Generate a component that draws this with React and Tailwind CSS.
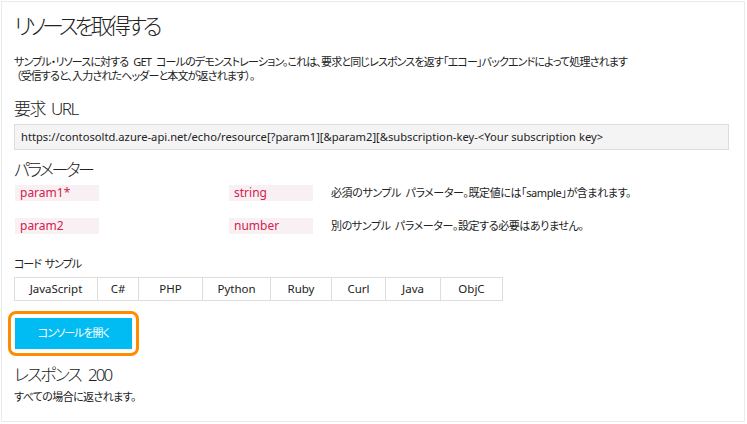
const FONT = "font-['Segoe_UI','Noto_Sans','Noto_Sans_CJK_JP',sans-serif] [font-feature-settings:'palt']"

const PARAMS = [
  { name: 'param1*', type: 'string', desc: '必須のサンプル パラメーター。既定値には「sample」が含まれます。' },
  { name: 'param2', type: 'number', desc: '別のサンプル パラメーター。設定する必要はありません。' },
]

const TABS = [
  ['JavaScript', 'w-[82px]'],
  ['C#', 'w-[41px]'],
  ['PHP', 'w-[64px]'],
  ['Python', 'w-[68px]'],
  ['Ruby', 'w-[61px]'],
  ['Curl', 'w-[54px]'],
  ['Java', 'w-[55px]'],
  ['ObjC', 'w-[62px]'],
]

function ParamRow({ p }) {
  return (
    <div className="flex items-center h-4 text-[12px]">
      <span className="w-[84px] h-4 leading-4 bg-[#f9f0f3] text-[#d4214f] pl-[5px] ml-px">{p.name}</span>
      <span className="w-[84px] h-4 leading-4 bg-[#f9f0f3] text-[#d4214f] pl-[5px] ml-[130px]">{p.type}</span>
      <span className="ml-[18px] text-[#222] text-[11px] tracking-[-0.4px] [word-spacing:2px]">{p.desc}</span>
    </div>
  )
}

export default function App() {
  return (
    <div className={`w-[747px] h-[424px] bg-white ${FONT}`}>
      <div className="ml-[1px] mt-[1px] w-[744px] h-[421px] border border-[#ebebeb] pl-[12px] pr-[14px] text-[#222]">
        <h1 className="text-[22px] leading-[30px] mt-[8px] font-light tracking-[-4px]">リソースを取得する</h1>

        <div className="mt-[15px] text-[11px] leading-[14px] tracking-[-0.85px] [word-spacing:3px] whitespace-nowrap">
          <p>サンプル・リソースに対する GET コールのデモンストレーション。これは、要求と同じレスポンスを返す「エコー」バックエンドによって処理されます</p>
          <p className="ml-[2px]">（受信すると、入力されたヘッダーと本文が返されます）。</p>
        </div>

        <h2 className="text-[17px] leading-[22px] mt-[15px] font-light tracking-[-1.5px] [word-spacing:3px]">要求 URL</h2>
        <div className="mt-[4px] w-[715px] h-[26px] bg-[#f4f4f4] border border-[#dcdcdc] px-[6px] text-[11.2px] leading-[24px] whitespace-nowrap">
          https://contosoltd.azure-api.net/echo/resource[?param1][&amp;param2][&amp;subscription-key-&lt;Your subscription key&gt;
        </div>

        <h2 className="text-[17px] leading-[22px] mt-[9px] font-light tracking-[-2.5px]">パラメーター</h2>
        <div className="mt-[4px] flex flex-col gap-[17px]">
          {PARAMS.map((p) => (
            <ParamRow key={p.name} p={p} />
          ))}
        </div>

        <div className="mt-[23px] text-[11px] leading-[14px] tracking-[-1px] [word-spacing:2px]">コード サンプル</div>
        <div className="mt-[6px] flex border border-[#ddd] w-fit h-[24px]">
          {TABS.map(([label, w], i) => (
            <div
              key={label}
              className={`${w} text-center text-[11.5px] leading-[22px] ${i > 0 ? 'border-l border-[#ddd]' : ''}`}
            >
              {label}
            </div>
          ))}
        </div>

        {/* focused console button */}
        <div className="mt-[10px] -ml-[6px] w-[131px] h-[45px] rounded-[8px] border-[3px] border-[#ff8c00] p-[4px]">
          <button className="w-full h-full bg-[#00bcf2] text-white text-[11px] tracking-[-1px]">コンソールを開く</button>
        </div>

        <h2 className="text-[17px] leading-[22px] mt-[8px] font-light tracking-[-2px] [word-spacing:5px]">レスポンス 200</h2>
        <p className="text-[11px] leading-[14px] mt-[4px] tracking-[-0.6px]">すべての場合に返されます。</p>
      </div>
    </div>
  )
}
